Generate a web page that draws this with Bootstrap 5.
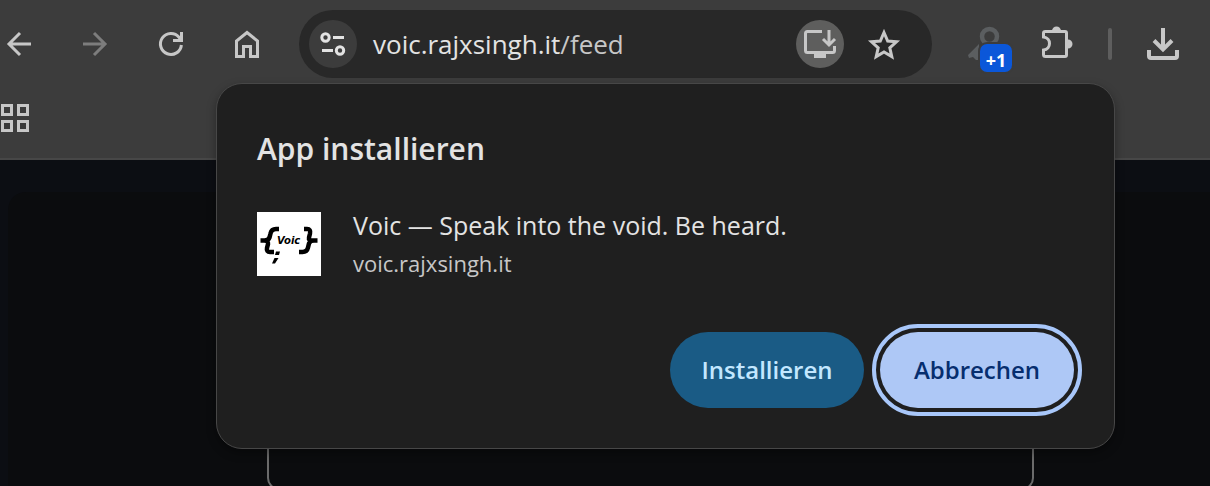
<!DOCTYPE html>
<html lang="de" data-bs-theme="dark">
<head>
<meta charset="utf-8">
<meta name="viewport" content="width=device-width, initial-scale=1">
<title>Voic</title>
<link href="https://cdn.jsdelivr.net/npm/bootstrap@5.3.0/dist/css/bootstrap.min.css" rel="stylesheet">
<style>
  body { font-family: "Open Sans", "Noto Sans", sans-serif; background: #0c0e13; color: #e3e3e3; }
  svg { display: block; flex: none; overflow: visible; }
  .browser-bar { background: #3c3c3c; border-bottom: 2px solid #474747; padding: 10px 31px 24px 3px; color: #c7c7c7; }
  .nav-buttons { gap: 44px; }
  .tool { border: 0; padding: 0; background: none; color: inherit; flex: none; width: 32px; height: 32px; }
  .tool:disabled { color: #7d7d7d; }
  .omnibox { background: #282828; border-radius: 34px; height: 68px; margin: 0 36px; padding: 0 32px 0 10px; min-width: 0; }
  .round-tool { width: 48px; height: 48px; border-radius: 50%; display: grid; place-items: center; }
  .site-info { background: #3c3c3c; color: #e3e3e3; }
  .install { background: #5e5e5d; }
  .address { font-size: 26px; line-height: 36px; margin-left: 16px; min-width: 0; color: #e3e3e3; }
  .address .path { color: #c7c7c7; }
  .ext { gap: 35px; }
  .key { width: 44px; height: 32px; margin-right: -6px; }
  .count { right: 0; top: 16px; width: 32px; height: 28px; border-radius: 7px; background: #0b57d9; color: #fff; font: 700 18px/32px "Open Sans", sans-serif; box-shadow: 0 0 0 2px #3c3c3c; }
  .divider { width: 4px; height: 32px; border-radius: 2px; background: #5e5e5e; }
  .bookmarks { margin: 24px 0 0 -3px; }
  .install-dialog { top: 83px; left: 216px; right: 95px; z-index: 2; background: #1f1f1f; border: 1px solid #474747; border-radius: 26px; padding: 44px 40px 40px; box-shadow: 0 4px 10px rgba(0,0,0,.35); }
  .install-dialog h1 { font-size: 30px; line-height: 42px; font-weight: 600; margin: 0 0 36px; color: #e3e3e3; }
  .app-row { gap: 32px; margin-bottom: 50px; }
  .app-name { font-size: 25px; line-height: 38px; }
  .app-host { font-size: 22px; line-height: 38px; color: #c7c7c7; }
  .pill { height: 76px; padding: 0; width: 194px; border: 0; border-radius: 38px; font-size: 24px; font-weight: 600; }
  .pill-install, .pill-install:hover { background: #1a5b85; color: #c2e7ff; }
  .pill-cancel, .pill-cancel:hover { background: #aec8f6; color: #062e6f; outline: 4px solid #a8c7fa; outline-offset: 4px; }
  .page { padding: 32px 0 0 8px; flex: 1; }
  .panel { background: #0b0c0e; border-top-left-radius: 18px; height: 100%; padding: 0 176px 0 259px; }
  .post { border: 2px solid #6b6b6b; border-radius: 12px; height: 298px; }
</style>
</head>
<body class="vh-100 overflow-hidden d-flex flex-column position-relative">
<header class="browser-bar">
  <div class="d-flex align-items-center">
    <nav class="nav-buttons d-flex" aria-label="Navigation">
      <button class="tool" aria-label="Zurück"><svg width="32" height="32" fill="none" stroke="currentColor" stroke-width="3"><path d="M28 16H6M17 5 6 16l11 11"/></svg></button>
      <button class="tool" aria-label="Vorwärts" disabled><svg width="32" height="32" fill="none" stroke="currentColor" stroke-width="3"><path d="M4 16h22M15 5l11 11-11 11"/></svg></button>
      <button class="tool" aria-label="Neu laden"><svg width="32" height="32" fill="none" stroke="currentColor" stroke-width="3"><path d="M26.400 17A10.500 10.500 0 1 1 24 9.200l2 3M26.500 4v8.500H18"/></svg></button>
      <button class="tool" aria-label="Startseite"><svg width="32" height="32" fill="none" stroke="currentColor" stroke-width="3"><path d="M5.500 28.500V13L16 4.500 26.500 13v15.500h-7v-10h-7v10z"/></svg></button>
    </nav>
    <div class="omnibox d-flex align-items-center flex-grow-1">
      <button class="tool round-tool site-info" aria-label="Website-Informationen"><svg width="28" height="28" fill="none" stroke="currentColor" stroke-width="3"><circle cx="6.500" cy="7.500" r="3.700"/><path d="M14 7.500h11M3 20.500h11"/><circle cx="21" cy="20.500" r="3.700"/></svg></button>
      <div class="address text-nowrap flex-grow-1">voic.rajxsingh.it<span class="path">/feed</span></div>
      <button class="tool round-tool install" aria-label="App installieren"><svg width="32" height="32" fill="none" stroke="currentColor"><path stroke-width="3" d="M18 3.500H3.500q-2 0-2 2v17q0 2 2 2h25q2 0 2-2V18M25 2v14M19 11l6 6 6-6"/><path fill="currentColor" stroke="none" d="M10 25h12v5H10z"/></svg></button>
      <button class="tool ms-4" aria-label="Lesezeichen hinzufügen"><svg width="32" height="32" fill="none" stroke="currentColor" stroke-width="3"><path d="m16 4.500 3.700 8.500 8.800.8-6.700 6 2 8.800-7.800-4.700-7.800 4.700 2-8.800-6.700-6 8.800-.8z"/></svg></button>
    </div>
    <div class="ext d-flex align-items-center">
      <button class="tool key position-relative" aria-label="Passwort-Erweiterung, 1 neu"><svg width="44" height="32"><circle cx="21.500" cy="8.500" r="7.500" fill="none" stroke="#5b5e60" stroke-width="4.500"/><path fill="#5b5e60" d="m0 27 11-11v16H8l-3-3-4 1z"/></svg><span class="count position-absolute text-center">+1</span></button>
      <button class="tool" aria-label="Erweiterungen"><svg width="32" height="32" fill="none" stroke="currentColor" stroke-width="3"><path d="M4.500 3.500h19.500q1.500 0 1.500 1.500v22q0 1.500-1.500 1.500H4.500q-2 0-2-2V22c8-1 8-12 0-13V5q0-1.500 2-1.500z"/><path fill="currentColor" stroke="none" d="M11 3a4.500 4.500 0 0 1 9 0zM27 11.500a4.500 4.500 0 0 1 0 9z"/></svg></button>
      <span class="divider"></span>
      <button class="tool" aria-label="Downloads"><svg width="32" height="32" fill="none" stroke="currentColor" stroke-width="4"><path d="M16 0v22M7 12.500l9 9 9-9M2 22v6q0 2 2 2h24q2 0 2-2v-6"/></svg></button>
    </div>
  </div>
  <div class="bookmarks d-flex">
    <button class="tool" aria-label="Alle Apps"><svg width="32" height="32" fill="none" stroke="currentColor" stroke-width="3"><path d="M2.500 3.500h9v9h-9zM18.500 3.500h9v9h-9zM2.500 19.500h9v9h-9zM18.500 19.500h9v9h-9z"/></svg></button>
  </div>
</header>
<main class="page"><div class="panel"><div class="post"></div></div></main>
<section class="install-dialog position-absolute" role="dialog" aria-labelledby="dlg">
  <h1 id="dlg">App installieren</h1>
  <div class="app-row d-flex align-items-center">
    <svg width="64" height="64" role="img" aria-label="Voic-Logo"><path fill="#fff" d="M0 0h64v64H0z"/>
      <g fill="none" stroke="#000" stroke-width="4.500"><path d="M22 17h-3q-4.500 0-5.500 4.500l-1 4q-1 3-5 3h-4M7 28.500q4.500 0 4 3.500l-1 4q-.8 4 3 4H17M47 17h3q4 0 3 4.500l-1 4q-.7 3 3.500 3h5M57 28.500q-4 0-5 3l-1 4q-1 4.500-5.500 4.500H42"/></g>
      <path d="M19 39.500h4L22 43h-4zM17.500 46h4L18 51.500h-3z"/>
      <text x="20" y="32" font-family="DejaVu Sans, sans-serif" font-size="10" font-weight="700" font-style="oblique">Voic</text></svg>
    <div><div class="app-name">Voic — Speak into the void. Be heard.</div><div class="app-host">voic.rajxsingh.it</div></div>
  </div>
  <div class="d-flex justify-content-end gap-3">
    <button class="btn pill pill-install">Installieren</button>
    <button class="btn pill pill-cancel">Abbrechen</button>
  </div>
</section>
<script src="https://cdn.jsdelivr.net/npm/bootstrap@5.3.0/dist/js/bootstrap.bundle.min.js"></script>
</body>
</html>
